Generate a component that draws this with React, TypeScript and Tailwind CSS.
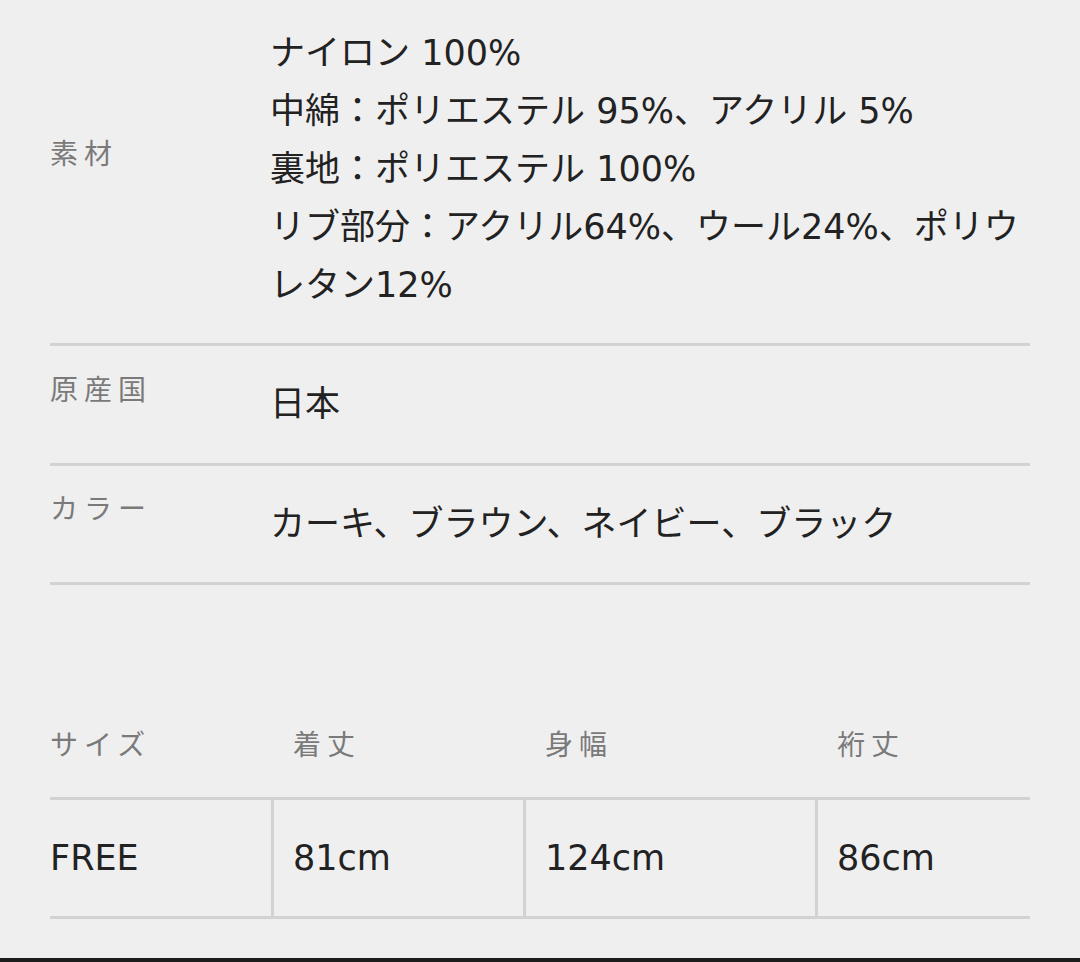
const font = { fontFamily: '"DejaVu Sans", "Noto Sans CJK JP", sans-serif' }

const Label = ({ children }: { children: React.ReactNode }) => (
  <div className="w-[220px] shrink-0 pb-[28px] text-[28px] leading-none tracking-[6px] text-[#7a7a7a]">{children}</div>
)

const Divider = () => <div className="h-[3px] bg-[#d2d2d2]" />

const materials = [
  'ナイロン 100%',
  '中綿：ポリエステル 95%、アクリル 5%',
  '裏地：ポリエステル 100%',
  'リブ部分：アクリル64%、ウール24%、ポリウ',
  'レタン12%',
]

const heads = ['サイズ', '着丈', '身幅', '裄丈']
const vals = ['FREE', '81cm', '124cm', '86cm']
const cols = 'grid grid-cols-[221px_252px_292px_214px]'

export default function App() {
  return (
    <div className="flex h-[962px] w-[1080px] flex-col overflow-hidden bg-[#efefef] text-[#222]" style={font}>
      <div className="flex-1 px-[50px]">
        <div className="flex items-center pt-[24px] pb-[29px]">
          <Label>素材</Label>
          <div className="text-[35px] leading-[58px] whitespace-nowrap">
            {materials.map((m) => (
              <div key={m}>{m}</div>
            ))}
          </div>
        </div>
        <Divider />
        <div className="flex h-[117px] items-center">
          <Label>原産国</Label>
          <div className="text-[35px] leading-none">日本</div>
        </div>
        <Divider />
        <div className="flex h-[116px] items-center">
          <Label>カラー</Label>
          <div className="text-[35px] leading-none">カーキ、ブラウン、ネイビー、ブラック</div>
        </div>
        <Divider />

        <div className={`${cols} mt-[147px] h-[65px] text-[28px] leading-none tracking-[6px] text-[#7a7a7a]`}>
          {heads.map((h, i) => (
            <div key={h} className={i === 0 ? '' : 'pl-[22px]'}>{h}</div>
          ))}
        </div>
        <div className={`${cols} border-y-[3px] border-[#d2d2d2]`}>
          {vals.map((v, i) => (
            <div
              key={v}
              className={`flex h-[116px] items-center text-[35px] leading-none ${i === 0 ? '' : 'border-l-[3px] border-[#d2d2d2] pl-[19px]'}`}
            >
              {v}
            </div>
          ))}
        </div>
      </div>
      <div className="h-[4px] bg-[#1c1c1c]" />
    </div>
  )
}
